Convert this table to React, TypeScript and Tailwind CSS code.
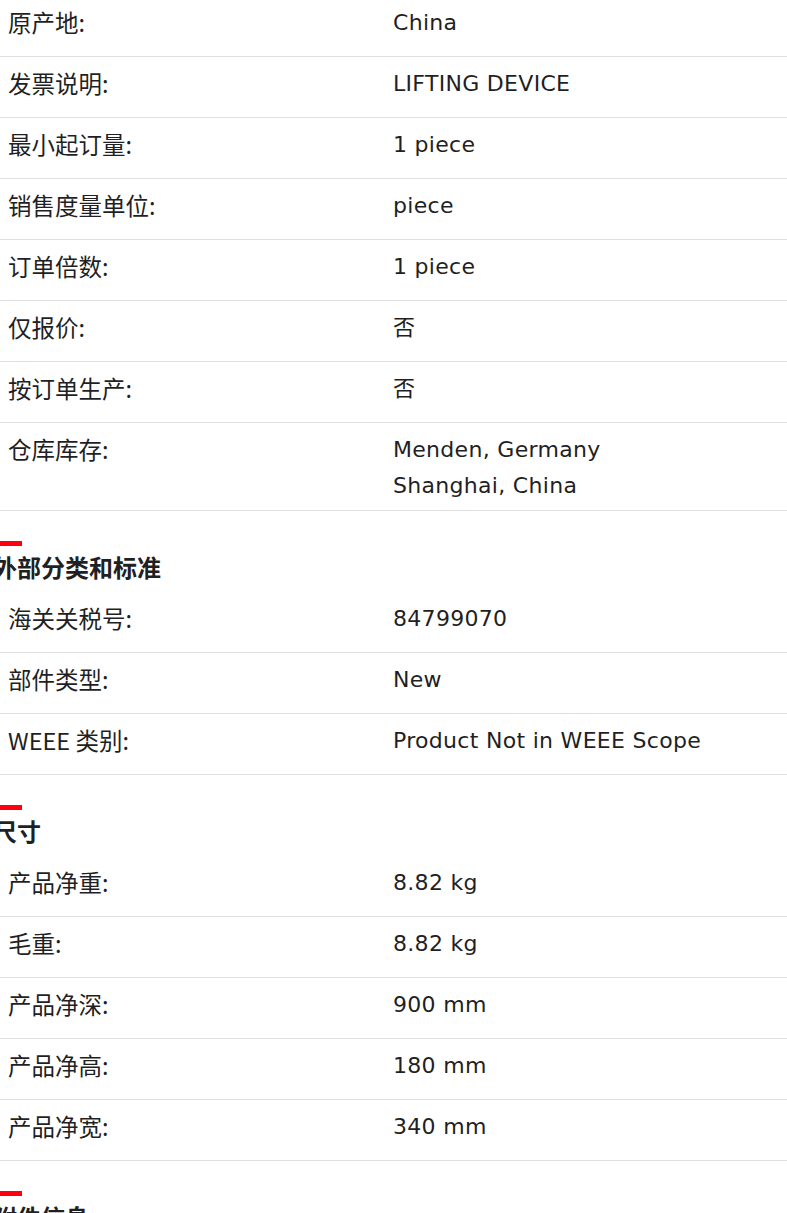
import React from "react";

type Row = { label: string; value: string[] };

const ordering: Row[] = [
  { label: "原产地:", value: ["China"] },
  { label: "发票说明:", value: ["LIFTING DEVICE"] },
  { label: "最小起订量:", value: ["1 piece"] },
  { label: "销售度量单位:", value: ["piece"] },
  { label: "订单倍数:", value: ["1 piece"] },
  { label: "仅报价:", value: ["否"] },
  { label: "按订单生产:", value: ["否"] },
  { label: "仓库库存:", value: ["Menden, Germany", "Shanghai, China"] },
];

const classifications: Row[] = [
  { label: "海关关税号:", value: ["84799070"] },
  { label: "部件类型:", value: ["New"] },
  { label: "WEEE 类别:", value: ["Product Not in WEEE Scope"] },
];

const dimensions: Row[] = [
  { label: "产品净重:", value: ["8.82 kg"] },
  { label: "毛重:", value: ["8.82 kg"] },
  { label: "产品净深:", value: ["900 mm"] },
  { label: "产品净高:", value: ["180 mm"] },
  { label: "产品净宽:", value: ["340 mm"] },
];

const cjk = "font-['Noto_Sans_CJK_SC',sans-serif]";
const latin = "font-['DejaVu_Sans','Noto_Sans_CJK_SC',sans-serif]";

function AttrRow({ row }: { row: Row }) {
  const multi = row.value.length > 1;
  return (
    <div
      className={`grid grid-cols-[385px_1fr] items-start border-b border-[#e0e0e0] pt-2 ${
        multi ? "pb-[6px]" : "h-[61px]"
      }`}
    >
      <div className={`pl-2 text-[23.5px] leading-[36px] text-[#1f1f24] ${cjk}`}>{row.label}</div>
      <div className={`pl-2 pt-px text-[22px] leading-[36px] tracking-[0.3px] text-[#1f1f24] ${latin}`}>
        {row.value.map((v) => (
          <div key={v}>{v}</div>
        ))}
      </div>
    </div>
  );
}

function Section({ title, rows }: { title: string; rows: Row[] }) {
  return (
    <div>
      <div className="-ml-[7px] mt-[30px] h-[5px] w-[29px] bg-[#ff000f]" />
      <h2 className={`-ml-[7px] pt-[5px] pb-[9px] text-[24px] font-bold leading-[32px] text-[#1f1f24] ${cjk}`}>
        {title}
      </h2>
      {rows.map((r) => (
        <AttrRow key={r.label} row={r} />
      ))}
    </div>
  );
}

export default function App() {
  return (
    <div className="h-[1213px] w-[787px] overflow-hidden bg-white">
      <div className="-mt-[4px]">
        {ordering.map((r) => (
          <AttrRow key={r.label} row={r} />
        ))}
      </div>
      <Section title="外部分类和标准" rows={classifications} />
      <Section title="尺寸" rows={dimensions} />
      <Section title="附件信息" rows={[]} />
    </div>
  );
}
